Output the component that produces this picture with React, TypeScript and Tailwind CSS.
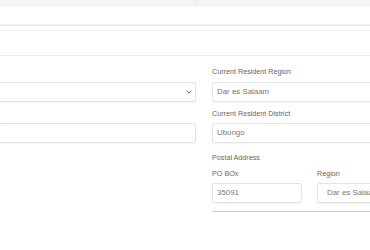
export default function App() {
  return (
    <div className="w-[370px] h-[250px] overflow-hidden bg-white font-['Liberation_Sans',Arial,sans-serif]">
      {/* header strip */}
      <div className="flex h-[6px] bg-[#f4f5f7] border-b border-[#eceef0]">
        <div className="w-[197px] border-r border-[#e4e6e9]" />
        <div className="flex-1" />
      </div>
      <div className="h-[18px]" />
      <div className="h-[2px] bg-[#eeeeee]" />
      <div className="h-[4px]" />
      <div className="h-px bg-[#f4f4f4]" />
      <div className="h-[24px]" />
      <div className="h-px bg-[#efefef]" />

      <div className="flex gap-[16px] pt-[10px]">
        {/* left column (mostly off-screen) */}
        <div className="w-[197px] shrink-0 -ml-[1px]">
          <div className="h-[11px] mb-[5px]" />
          <div className="h-[20px] border border-[#e2e2e2] rounded-[2px] shadow-[0_1px_1px_rgba(0,0,0,0.04)] flex items-center justify-end pr-[3px]">
            <svg width="6" height="4" viewBox="0 0 6 4" className="text-[#777]">
              <path d="M0.6 0.6 L3 3 L5.4 0.6" fill="none" stroke="currentColor" strokeWidth="1" />
            </svg>
          </div>
          <div className="h-[11px] mt-[6px] mb-[4px]" />
          <div className="h-[20px] border border-[#e2e2e2] rounded-[2px] shadow-[0_1px_1px_rgba(0,0,0,0.04)]" />
        </div>

        {/* right column */}
        <div className="w-[195px] shrink-0 text-[#666]">
          <div className="h-[11px] leading-[11px] text-[7.2px] mb-[5px]">Current Resident Region</div>
          <div className="h-[20px] border border-[#e4e4e4] rounded-[2px] shadow-[0_1px_1px_rgba(0,0,0,0.04)] flex items-center pl-[4px] text-[7.9px] text-[#777]">
            Dar es Salaam
          </div>
          <div className="h-[11px] leading-[11px] text-[7.2px] mt-[6px] mb-[4px]">Current Resident District</div>
          <div className="h-[20px] border border-[#e4e4e4] rounded-[2px] shadow-[0_1px_1px_rgba(0,0,0,0.04)] flex items-center pl-[4px] text-[7.9px] text-[#777]">
            Ubungo
          </div>
          <div className="h-[11px] leading-[11px] text-[7.2px] mt-[9px]">Postal Address</div>
          <div className="grid grid-cols-2 gap-[15px] mt-[5px]">
            <div>
              <div className="h-[11px] leading-[11px] text-[7.2px] mb-[4px]">PO BOx</div>
              <div className="h-[20px] border border-[#e4e4e4] rounded-[2px] shadow-[0_1px_1px_rgba(0,0,0,0.04)] flex items-center pl-[4px] text-[7.9px] text-[#777]">
                35091
              </div>
            </div>
            <div>
              <div className="h-[11px] leading-[11px] text-[7.2px] mb-[4px]">Region</div>
              <div className="h-[20px] border border-[#e4e4e4] rounded-[2px] shadow-[0_1px_1px_rgba(0,0,0,0.04)] flex items-center pl-[9px] text-[7.9px] text-[#777] whitespace-nowrap">
                Dar es Salaam
              </div>
            </div>
          </div>
          <div className="h-px bg-[#c9c9c9] mt-[8px]" />
        </div>
      </div>
    </div>
  );
}
